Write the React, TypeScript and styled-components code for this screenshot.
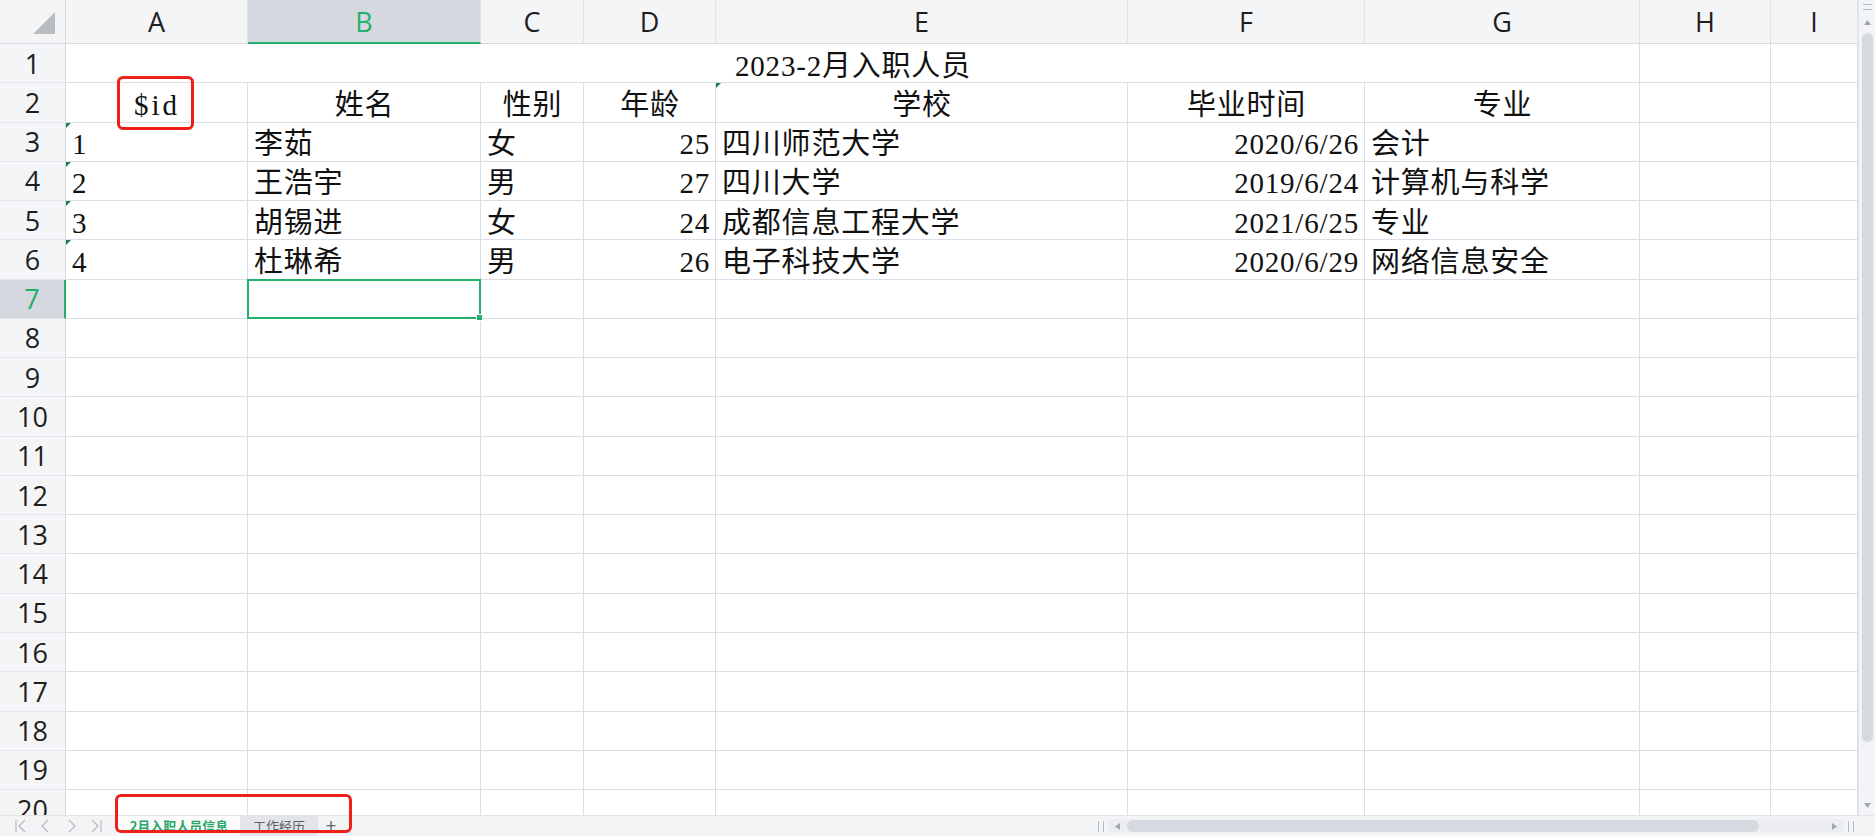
import styled, { createGlobalStyle } from "styled-components";

const GlobalStyle = createGlobalStyle`
  html, body {
    margin: 0;
    padding: 0;
    background: #ffffff;
  }
  body {
    width: 1875px;
    height: 836px;
    overflow: hidden;
  }
`;

type Align = "left" | "center" | "right";

const GREEN = "#22b06c";
const GRID = "#d8dde7";
const HEAD_BG = "#f4f5f7";
const HEAD_ACTIVE = "#d5d8de";

const COLUMNS = ["A", "B", "C", "D", "E", "F", "G", "H", "I"];
const ROW_COUNT = 20;

const HEADERS = ["$id", "姓名", "性别", "年龄", "学校", "毕业时间", "专业"];
const DATA_ALIGN: Align[] = ["left", "left", "left", "right", "left", "right", "left"];

const STAFF = [
  ["1", "李茹", "女", "25", "四川师范大学", "2020/6/26", "会计"],
  ["2", "王浩宇", "男", "27", "四川大学", "2019/6/24", "计算机与科学"],
  ["3", "胡锡进", "女", "24", "成都信息工程大学", "2021/6/25", "专业"],
  ["4", "杜琳希", "男", "26", "电子科技大学", "2020/6/29", "网络信息安全"],
];

const Window = styled.div`
  position: relative;
  width: 1875px;
  height: 836px;
  display: flex;
  flex-direction: column;
  background: #ffffff;
  overflow: hidden;
`;

const Main = styled.div`
  flex: 1;
  min-height: 0;
  display: flex;
`;

const Sheet = styled.div`
  flex: 1;
  display: grid;
  grid-template-columns: 66px 182px 233px 103px 132px 412px 237px 275px 131px 1fr;
  grid-template-rows: 44px repeat(${ROW_COUNT}, 39.28px);
  align-content: start;
  overflow: hidden;
`;

const Corner = styled.div`
  box-sizing: border-box;
  display: flex;
  align-items: flex-end;
  justify-content: flex-end;
  padding: 0 10px 9px 0;
  background: ${HEAD_BG};
  border-right: 1px solid #d5d8de;
  border-bottom: 1px solid #d5d8de;
`;

const ColHead = styled.div<{ $active?: boolean }>`
  box-sizing: border-box;
  display: flex;
  align-items: center;
  justify-content: center;
  background: ${(p) => (p.$active ? HEAD_ACTIVE : HEAD_BG)};
  border-right: 1px solid #dfe2e7;
  border-bottom: ${(p) => (p.$active ? `2px solid ${GREEN}` : "1px solid #d5d8de")};
  color: ${(p) => (p.$active ? GREEN : "#1e1e1e")};
  font-family: "Open Sans", "Noto Sans", sans-serif;
  font-size: 27px;
  line-height: 1;
`;

const RowHead = styled.div<{ $active?: boolean }>`
  box-sizing: border-box;
  display: flex;
  align-items: center;
  justify-content: center;
  background: ${(p) => (p.$active ? HEAD_ACTIVE : HEAD_BG)};
  border-right: ${(p) => (p.$active ? `2px solid ${GREEN}` : "1px solid #d5d8de")};
  border-bottom: 1px solid #e2e5ea;
  color: ${(p) => (p.$active ? GREEN : "#1e1e1e")};
  font-family: "Open Sans", "Noto Sans", sans-serif;
  font-size: 27px;
  line-height: 1;
`;

const Cell = styled.div<{ $align?: Align; $span?: number; $flag?: boolean }>`
  position: relative;
  box-sizing: border-box;
  grid-column: span ${(p) => p.$span ?? 1};
  display: flex;
  align-items: center;
  justify-content: ${(p) =>
    p.$align === "right" ? "flex-end" : p.$align === "center" ? "center" : "flex-start"};
  padding: 6px 5px 0 6px;
  border-right: 1px solid ${GRID};
  border-bottom: 1px solid ${GRID};
  font-family: "Liberation Serif", "Noto Sans CJK SC", serif;
  font-size: 29px;
  line-height: 1;
  letter-spacing: 0.8px;
  color: #111111;
  white-space: nowrap;

  &::before {
    content: "";
    display: ${(p) => (p.$flag ? "block" : "none")};
    position: absolute;
    top: 0;
    left: 0;
    border-top: 5px solid #1d7d4b;
    border-right: 5px solid transparent;
  }
`;

const CodeText = styled.span`
  letter-spacing: 3px;
`;

const Selection = styled.div`
  position: absolute;
  z-index: 2;
  top: -1px;
  left: -1px;
  right: -1px;
  bottom: -1px;
  border: 2px solid ${GREEN};
  pointer-events: none;
`;

const FillHandle = styled.span`
  position: absolute;
  right: -4px;
  bottom: -4px;
  width: 5px;
  height: 5px;
  background: ${GREEN};
  border: 1px solid #ffffff;
`;

const VScroll = styled.div`
  width: 17px;
  flex: none;
  display: flex;
  flex-direction: column;
  align-items: center;
  background: #f3f4f6;
  border-left: 1px solid #e3e5e9;
  box-sizing: border-box;
`;

const Grip = styled.div<{ $vertical?: boolean }>`
  flex: none;
  width: ${(p) => (p.$vertical ? "4px" : "9px")};
  height: ${(p) => (p.$vertical ? "11px" : "4px")};
  border-style: solid;
  border-color: #b8bcc3;
  border-width: ${(p) => (p.$vertical ? "0 1px" : "1px 0")};
`;

const ScrollArrow = styled.svg`
  flex: none;
  width: 7px;
  height: 7px;
  fill: #a3a8b0;
`;

const VThumb = styled.div`
  flex: none;
  width: 11px;
  height: 709px;
  margin-top: 7px;
  border-radius: 6px;
  background: #d6d9df;
`;

const Spacer = styled.div`
  flex: 1;
`;

const BottomBar = styled.div`
  height: 21px;
  flex: none;
  display: flex;
  align-items: stretch;
  background: #f3f4f6;
  border-top: 1px solid #e2e4e8;
  box-sizing: border-box;
`;

const NavGroup = styled.div`
  display: flex;
  align-items: center;
  padding-left: 8px;
  width: 118px;
  flex: none;
  box-sizing: border-box;
`;

const NavButton = styled.div`
  width: 25px;
  display: flex;
  align-items: center;
  justify-content: center;
  color: #b5b9bf;
`;

const Tab = styled.div<{ $active?: boolean; $w: number }>`
  flex: none;
  width: ${(p) => p.$w}px;
  display: flex;
  align-items: center;
  justify-content: center;
  padding-bottom: 1px;
  box-sizing: border-box;
  background: ${(p) => (p.$active ? "#fbfbfc" : "#e3e5e9")};
  color: ${(p) => (p.$active ? "#27a866" : "#5b5f66")};
  font-family: "Noto Sans CJK SC", sans-serif;
  font-size: 13px;
  line-height: 1;
  font-weight: ${(p) => (p.$active ? 700 : 400)};
  white-space: nowrap;
`;

const AddTab = styled.div`
  width: 26px;
  display: flex;
  align-items: center;
  justify-content: center;
  padding-bottom: 1px;
  box-sizing: border-box;
  color: #60646b;
  font-family: "Liberation Sans", sans-serif;
  font-size: 18px;
  line-height: 1;
`;

const HScroll = styled.div`
  width: 777px;
  flex: none;
  display: flex;
  align-items: center;
  gap: 4px;
  padding-right: 21px;
  box-sizing: border-box;
`;

const HTrack = styled.div`
  flex: 1;
  height: 14px;
  display: flex;
  align-items: center;
  padding: 0 6px;
  gap: 6px;
  background: #eceef1;
  border-radius: 2px;
`;

const HThumb = styled.div`
  width: 632px;
  height: 12px;
  border-radius: 6px;
  background: #d6d9df;
`;

const Annotation = styled.div<{ $left: number; $top: number; $w: number; $h: number }>`
  position: absolute;
  z-index: 5;
  left: ${(p) => p.$left}px;
  top: ${(p) => p.$top}px;
  width: ${(p) => p.$w}px;
  height: ${(p) => p.$h}px;
  box-sizing: border-box;
  border: 3px solid #ee2118;
  border-radius: 6px;
  pointer-events: none;
`;

const Arrow = ({ dir }: { dir: "up" | "down" | "left" | "right" }) => {
  const points = {
    up: "3.5,1 7,6 0,6",
    down: "0,1 7,1 3.5,6",
    left: "6,0 6,7 1,3.5",
    right: "1,0 1,7 6,3.5",
  }[dir];
  return (
    <ScrollArrow viewBox="0 0 7 7">
      <polygon points={points} />
    </ScrollArrow>
  );
};

const NavIcon = ({ kind }: { kind: "first" | "prev" | "next" | "last" }) => {
  const d = {
    first: "M2 1v12M11 1L5 7l6 6",
    prev: "M9 1L3 7l6 6",
    next: "M5 1l6 6-6 6",
    last: "M12 1v12M3 1l6 6-6 6",
  }[kind];
  return (
    <svg width="14" height="14" viewBox="0 0 14 14" fill="none" stroke="currentColor" strokeWidth="1.2">
      <path d={d} />
    </svg>
  );
};

const EmptyRow = ({ row }: { row: number }) => (
  <>
    <RowHead $active={row === 7}>{row}</RowHead>
    {COLUMNS.map((c) => (
      <Cell key={c}>
        {row === 7 && c === "B" && (
          <Selection>
            <FillHandle />
          </Selection>
        )}
      </Cell>
    ))}
  </>
);

const StaffRow = ({ row, person }: { row: number; person: string[] }) => (
  <>
    <RowHead>{row}</RowHead>
    {person.map((value, i) => (
      <Cell key={i} $align={DATA_ALIGN[i]} $flag={i === 0}>
        {value}
      </Cell>
    ))}
    <Cell />
    <Cell />
  </>
);

export default function App() {
  return (
    <Window>
      <GlobalStyle />
      <Main>
        <Sheet>
          <Corner>
            <svg width="22" height="22" viewBox="0 0 22 22">
              <polygon points="22,0 22,22 0,22" fill="#b9bdbf" />
            </svg>
          </Corner>
          {COLUMNS.map((c) => (
            <ColHead key={c} $active={c === "B"}>
              {c}
            </ColHead>
          ))}

          <RowHead>1</RowHead>
          <Cell $span={7} $align="center">
            2023-2月入职人员
          </Cell>
          <Cell />
          <Cell />

          <RowHead>2</RowHead>
          {HEADERS.map((h, i) => (
            <Cell key={h} $align="center" $flag={i === 4}>
              {i === 0 ? <CodeText>{h}</CodeText> : h}
            </Cell>
          ))}
          <Cell />
          <Cell />

          {STAFF.map((person, r) => (
            <StaffRow key={r} row={r + 3} person={person} />
          ))}

          {Array.from({ length: ROW_COUNT - 6 }, (_, i) => (
            <EmptyRow key={i} row={i + 7} />
          ))}
        </Sheet>

        <VScroll>
          <Grip style={{ marginTop: 4 }} />
          <div style={{ height: 9 }} />
          <Arrow dir="up" />
          <VThumb />
          <Spacer />
          <Arrow dir="down" />
          <div style={{ height: 6 }} />
        </VScroll>
      </Main>

      <BottomBar>
        <NavGroup>
          <NavButton>
            <NavIcon kind="first" />
          </NavButton>
          <NavButton>
            <NavIcon kind="prev" />
          </NavButton>
          <NavButton>
            <NavIcon kind="next" />
          </NavButton>
          <NavButton>
            <NavIcon kind="last" />
          </NavButton>
        </NavGroup>
        <Tab $active $w={122}>
          2月入职人员信息
        </Tab>
        <Tab $w={78}>工作经历</Tab>
        <AddTab>+</AddTab>
        <Spacer />
        <HScroll>
          <Grip $vertical />
          <HTrack>
            <Arrow dir="left" />
            <HThumb />
            <Spacer />
            <Arrow dir="right" />
          </HTrack>
          <Grip $vertical />
        </HScroll>
      </BottomBar>

      <Annotation $left={117} $top={76} $w={77} $h={54} />
      <Annotation $left={115} $top={794} $w={237} $h={39} />
    </Window>
  );
}
